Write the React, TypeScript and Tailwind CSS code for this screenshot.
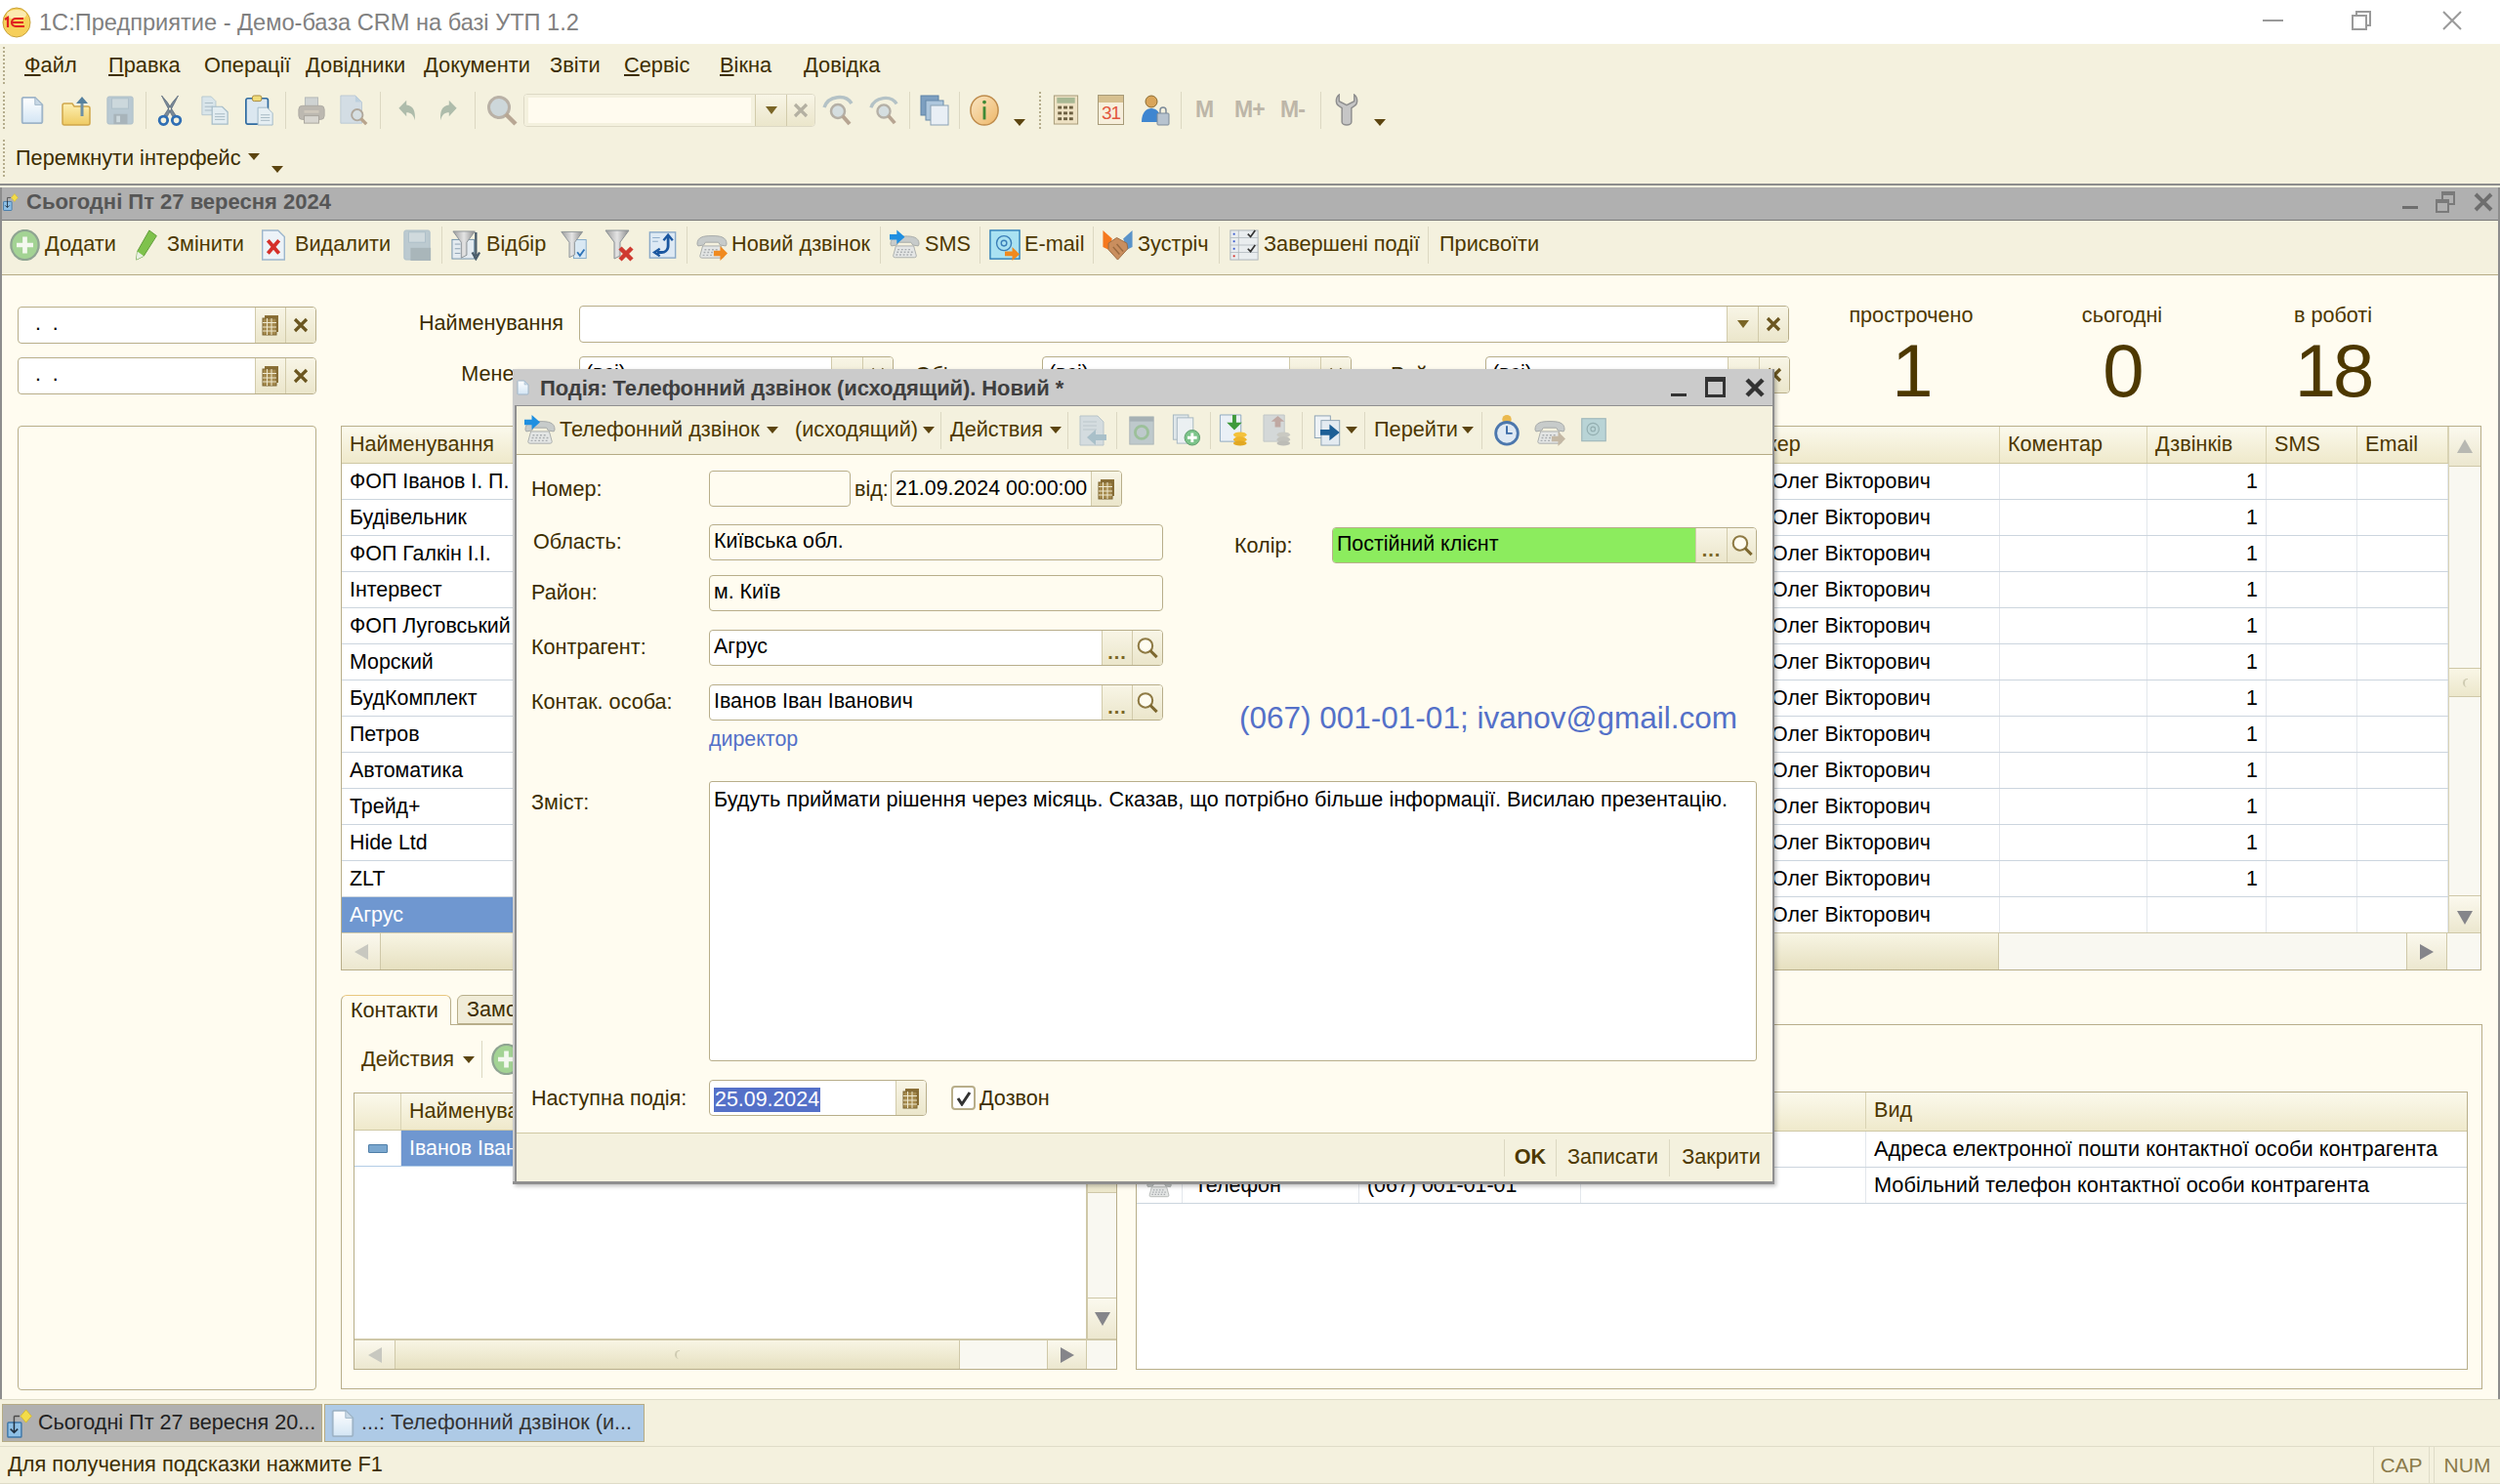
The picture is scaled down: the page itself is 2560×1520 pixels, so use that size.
import React from "react";

type P = { className?: string };
type C = { children?: React.ReactNode; className?: string };

const Doc = ({ className = "", stroke = "#9fb5c8" }: P & { stroke?: string }) => (
  <svg className={className} viewBox="0 0 26 32">
    <defs>
      <linearGradient id="docg" x1="0" y1="0" x2="0" y2="1">
        <stop offset="0" stopColor="#ffffff" />
        <stop offset="1" stopColor="#d3e5f4" />
      </linearGradient>
    </defs>
    <path d="M3 2h13l8 8v18a2 2 0 01-2 2H3a2 2 0 01-1-2V3z" fill="url(#docg)" stroke={stroke} strokeWidth="2" />
    <path d="M16 2v8h8z" fill="#c9d9e6" stroke={stroke} strokeWidth="1" />
  </svg>
);
const Folder = ({ className = "" }: P) => (
  <svg className={className} viewBox="0 0 30 32">
    <defs>
      <linearGradient id="fold" x1="0" y1="0" x2="0" y2="1">
        <stop offset="0" stopColor="#fdf0b4" />
        <stop offset="1" stopColor="#efcb62" />
      </linearGradient>
    </defs>
    <path d="M1 11a2 2 0 012-2h8l2 3h14a2 2 0 012 2v15a2 2 0 01-2 2H3a2 2 0 01-2-2z" fill="url(#fold)" stroke="#d0a74a" strokeWidth="1.5" />
    <path d="M21 22V5" stroke="#6d90a6" strokeWidth="3" />
    <path d="M15 9l6-7 6 7z" fill="#55819f" />
  </svg>
);
const Floppy = ({ className = "" }: P) => (
  <svg className={className} viewBox="0 0 30 32">
    <rect x="1" y="1" width="28" height="30" rx="2" fill="#b9c9d2" stroke="#aebfc8" />
    <rect x="6" y="3" width="18" height="11" fill="#ccd8dc" stroke="#aebfc8" />
    <rect x="8" y="20" width="15" height="11" fill="#a8b4ba" />
    <rect x="11" y="22" width="4" height="7" fill="#ccd8dc" />
  </svg>
);
const Scissors = ({ className = "" }: P) => (
  <svg className={className} viewBox="0 0 26 34" fill="none">
    <path d="M4 1l4 8 8 15 3-2L10 8zM22 1l-4 8-8 15-3-2 9-14z" fill="#7a8a98" stroke="#55667a" strokeWidth="0.8" />
    <circle cx="6" cy="28" r="4.5" stroke="#2f6eb4" strokeWidth="3" />
    <circle cx="20" cy="28" r="4.5" stroke="#2f6eb4" strokeWidth="3" />
  </svg>
);
const Copy = ({ className = "" }: P) => (
  <svg className={className} viewBox="0 0 30 32">
    <path d="M1 1h10l5 5v15H1z" fill="#d9e5ea" stroke="#b5c7cf" />
    <path d="M4 8h9M4 12h9M4 16h9" stroke="#a9bbc4" />
    <path d="M12 12h11l6 6v13H12z" fill="#e3edf1" stroke="#a5bcc8" strokeWidth="1.3" />
    <path d="M15 20h11M15 23h11M15 26h11" stroke="#a5b9c2" />
  </svg>
);
const Paste = ({ className = "" }: P) => (
  <svg className={className} viewBox="0 0 31 34">
    <rect x="1" y="4" width="24" height="28" rx="2" fill="#dbe7f0" stroke="#2f6ba0" strokeWidth="1.8" />
    <rect x="8" y="1" width="10" height="6" rx="2" fill="#f0dc7a" stroke="#a8883a" />
    <path d="M14 14h10l6 6v13H14z" fill="#e6eff3" stroke="#9fb8c6" />
    <path d="M17 22h10M17 25h10M17 28h10" stroke="#a5b9c2" />
  </svg>
);
const Printer = ({ className = "" }: P) => (
  <svg className={className} viewBox="0 0 30 32">
    <rect x="8" y="2" width="14" height="11" fill="#cfd3d2" stroke="#b4b8b8" />
    <rect x="1" y="11" width="28" height="15" rx="4" fill="#bcb8b0" stroke="#adaaa2" />
    <rect x="7" y="16" width="16" height="3" fill="#cfc8bc" />
    <rect x="7" y="22" width="16" height="8" fill="#d8d6d0" stroke="#a8a49c" />
  </svg>
);
const Preview = ({ className = "" }: P) => (
  <svg className={className} viewBox="0 0 31 34">
    <path d="M1 1h16l7 7v23H1z" fill="#d3dde4" stroke="#bccad4" />
    <path d="M17 1v7h7z" fill="#bdd0de" />
    <circle cx="19" cy="22" r="6" fill="#d6dfe2" stroke="#b0a89c" strokeWidth="2" />
    <path d="M23 26l6 6" stroke="#b8a48c" strokeWidth="3.5" />
  </svg>
);
const Undo = ({ className = "", flip = false }: P & { flip?: boolean }) => (
  <svg className={className} viewBox="0 0 24 28">
    <g transform={flip ? "translate(24 0) scale(-1 1)" : undefined}>
      <path d="M1 11L11 1v6c9 1 12 8 11 20-2-7-5-10-11-10v5z" fill="#aebcab" />
    </g>
  </svg>
);
const Glass = ({ className = "", c = "#b9b1a6", h = "#b8a794", f = "#cdd7da" }: P & { c?: string; h?: string; f?: string }) => (
  <svg className={className} viewBox="0 0 32 32">
    <circle cx="13" cy="13" r="10.5" fill={f} stroke={c} strokeWidth="3" />
    <path d="M20 20l10 10" stroke={h} strokeWidth="4.5" />
  </svg>
);
const FindArc = ({ className = "" }: P) => (
  <svg className={className} viewBox="0 0 32 34" fill="none">
    <path d="M2 14C6 2 24 0 30 10" stroke="#b4c2c6" strokeWidth="3.5" />
    <circle cx="16" cy="18" r="7" fill="#d5dee0" stroke="#b5b0a6" strokeWidth="2.5" />
    <path d="M21 23l7 8" stroke="#b7a592" strokeWidth="4" />
  </svg>
);
const Windows = ({ className = "" }: P) => (
  <svg className={className} viewBox="0 0 30 32">
    <rect x="1" y="1" width="18" height="20" fill="#7d9fc0" stroke="#5d82a5" />
    <rect x="6" y="6" width="18" height="20" fill="#aec7dd" stroke="#678aa9" />
    <rect x="11" y="11" width="18" height="20" fill="#e9eff5" stroke="#8aa1b4" />
  </svg>
);
const Info = ({ className = "" }: P) => (
  <svg className={className} viewBox="0 0 32 34">
    <defs>
      <linearGradient id="infg" x1="0" y1="0" x2="1" y2="1">
        <stop offset="0" stopColor="#f9e6c4" />
        <stop offset="1" stopColor="#eeb768" />
      </linearGradient>
    </defs>
    <ellipse cx="16" cy="17" rx="15" ry="16" fill="url(#infg)" stroke="#bf8c4c" strokeWidth="1.6" />
    <rect x="14.5" y="13" width="3" height="14" fill="#3e8a35" />
    <circle cx="16" cy="8" r="2" fill="#3e8a35" />
  </svg>
);
const Calc = ({ className = "" }: P) => (
  <svg className={className} viewBox="0 0 27 32">
    <rect x="1" y="1" width="25" height="30" fill="#eee2c4" stroke="#a69a78" />
    <rect x="4" y="3" width="19" height="6" fill="#a8b894" />
    <g fill="#6c5f40">
      <rect x="5" y="12" width="4" height="3" /><rect x="11" y="12" width="4" height="3" /><rect x="17" y="12" width="4" height="3" />
      <rect x="5" y="18" width="4" height="3" /><rect x="11" y="18" width="4" height="3" /><rect x="17" y="18" width="4" height="3" />
      <rect x="5" y="24" width="4" height="3" /><rect x="11" y="24" width="4" height="3" /><rect x="17" y="24" width="4" height="3" />
    </g>
  </svg>
);
const Cal31 = ({ className = "" }: P) => (
  <div className={`relative border border-[#a69a78] bg-[#f7efdc] flex items-end justify-center ${className}`}>
    <span className="absolute top-0 left-0 right-0 h-[7px] bg-[#d6c090]" />
    <span className="text-[19px] leading-[23px] text-[#e2563e] tracking-[-1px]">31</span>
  </div>
);
const UserLock = ({ className = "" }: P) => (
  <svg className={className} viewBox="0 0 30 32">
    <circle cx="11" cy="7" r="6" fill="#d9a55a" stroke="#8a6a30" />
    <path d="M1 28c0-10 5-14 10-14s10 4 10 14z" fill="#3f86d0" />
    <rect x="17" y="19" width="12" height="12" rx="1" fill="#b7c3cf" stroke="#7d8b99" />
    <path d="M20 19v-3a3 3 0 016 0v3" fill="none" stroke="#7d8b99" strokeWidth="1.5" />
  </svg>
);
const Wrench = ({ className = "" }: P) => (
  <svg className={className} viewBox="0 0 24 34">
    <path d="M4 1v7l8 4 8-4V1c4 3 4 10 0 12l-3 2v15a5 3 0 01-10 0V15l-3-2C0 11 0 4 4 1z" fill="#c6c6c6" stroke="#8e8e8e" strokeWidth="1.5" />
  </svg>
);
const PlusCircle = ({ className = "" }: P) => (
  <svg className={className} viewBox="0 0 32 34">
    <ellipse cx="16" cy="17" rx="15" ry="16" fill="#a3d394" stroke="#8fa492" strokeWidth="2.4" />
    <path d="M16 8v18M7 17h18" stroke="#f4f8ef" strokeWidth="5" />
  </svg>
);
const Pencil = ({ className = "" }: P) => (
  <svg className={className} viewBox="0 0 24 34">
    <path d="M15 1l8 6-14 22-8 4 1-9z" fill="#7fc24c" stroke="#5e9a38" />
    <path d="M1 33l1-9 7 5z" fill="#e9efe4" />
  </svg>
);
const DelDoc = ({ className = "" }: P) => (
  <svg className={className} viewBox="0 0 26 34">
    <path d="M1 1h17l7 7v25H1z" fill="#edf3f8" stroke="#9db6cc" strokeWidth="1.5" />
    <path d="M7 12l12 14M19 12L7 26" stroke="#d5302a" strokeWidth="4" />
  </svg>
);
const SaveOk = ({ className = "" }: P) => (
  <svg className={className} viewBox="0 0 30 34">
    <rect x="1" y="1" width="28" height="32" rx="2" fill="#bccad0" stroke="#aebfc8" />
    <rect x="6" y="3" width="18" height="11" fill="#d0dadd" stroke="#aebfc8" />
    <rect x="8" y="20" width="22" height="14" fill="#a9b6ba" />
  </svg>
);
const Funnel = ({ className = "", mode }: P & { mode?: "x" | "list" | "check" }) => (
  <svg className={className} viewBox="0 0 32 34">
    <defs>
      <linearGradient id="fung" x1="0" y1="0" x2="1" y2="0">
        <stop offset="0" stopColor="#9c9c9c" />
        <stop offset="0.5" stopColor="#e4e4e4" />
        <stop offset="1" stopColor="#8c8c8c" />
      </linearGradient>
    </defs>
    {mode === "list" && <rect x="1" y="11" width="24" height="21" fill="#e4ebf0" stroke="#6f8fa8" />}
    {mode === "list" && <path d="M4 16h6M4 21h6M4 26h6" stroke="#8a9eb0" />}
    {mode === "check" && <rect x="16" y="11" width="14" height="21" fill="#d9e8f3" stroke="#7fa7c8" />}
    <path d="M2 2h24L17 14v14l-6 3V14z" fill="url(#fung)" stroke="#8b9296" strokeWidth="1" />
    {mode === "x" && <path d="M17 20l12 12M29 20L17 32" stroke="#cf3a30" strokeWidth="4.5" />}
    {mode === "check" && <path d="M20 25l3 4 5-7" stroke="#2f74b8" strokeWidth="2" fill="none" />}
    {mode === "list" && <path d="M27 3v26M23 25l4 7 4-7" stroke="#4a5c6a" strokeWidth="2.5" fill="none" />}
  </svg>
);
const Refresh = ({ className = "" }: P) => (
  <svg className={className} viewBox="0 0 30 32" fill="none">
    <rect x="1" y="2" width="28" height="28" fill="#dde9f4" stroke="#8aa9c8" strokeWidth="1.5" />
    <path d="M4 8h8M4 12h6" stroke="#8aa9c8" />
    <path d="M21 7v10c0 5-4 7-7 7H9" stroke="#1b57a0" strokeWidth="3" />
    <path d="M16 11l5-6 5 6M12 20l-6 4 6 4" stroke="#1b57a0" strokeWidth="2.5" />
  </svg>
);
const PhoneIco = ({ className = "", arrow }: P & { arrow?: "orange" | "blue" | "dim" }) => (
  <svg className={className} viewBox="0 0 34 34">
    <path d="M1 16c0-8 7-9 16-9s16 1 16 9l-1 2-6-1-2-3H10l-2 3-6 1z" fill="#c7cbca" stroke="#a4a8a6" />
    <path d="M7 18h20l3 11a2 2 0 01-2 2H6a2 2 0 01-2-2z" fill="#e4e6e5" stroke="#a8acaa" />
    <g stroke="#a9adb0" strokeWidth="1.5">
      <path d="M9 22h16M8 25h18M7 28h20" strokeDasharray="2 2" />
    </g>
    {arrow === "orange" && <path d="M19 23h7v-5l8 8-8 8v-5h-7z" fill="#f08a1f" />}
    {arrow === "blue" && <path d="M0 5h8V0l9 8-9 8v-5H0z" fill="#1f8fe0" />}
    {arrow === "dim" && <path d="M19 23h7v-5l8 8-8 8v-5h-7z" fill="#c4b8a4" />}
  </svg>
);
const MailIco = ({ className = "", dim = false }: P & { dim?: boolean }) => (
  <svg className={className} viewBox="0 0 34 34">
    <rect x="1" y="1" width="32" height={dim ? 30 : 31} fill={dim ? "#b9d4d6" : "#a9e2f2"} stroke={dim ? "#9fb7ba" : "#2d7fb8"} strokeWidth="1.5" />
    <circle cx="16" cy="15" r="8" fill="none" stroke={dim ? "#93aeb0" : "#3a7fb8"} strokeWidth="1.5" />
    <circle cx="16" cy="15" r="3" fill="none" stroke={dim ? "#93aeb0" : "#3a7fb8"} strokeWidth="1.5" />
    {!dim && <path d="M17 24h8v-5l8 8-8 7v-5h-8z" fill="#f08a1f" />}
  </svg>
);
const Shake = ({ className = "" }: P) => (
  <svg className={className} viewBox="0 0 34 34">
    <path d="M1 1l10 9-4 12-6-3z" fill="#f5781e" />
    <path d="M33 1l-10 9 4 12 6-3z" fill="#5a93c9" />
    <path d="M7 15l9-6 11 6 1 6-11 12L7 22z" fill="#c98e5e" stroke="#9a6a40" />
    <path d="M12 19l7 8M16 16l7 8" stroke="#9a6a40" strokeWidth="1.5" />
  </svg>
);
const Checklist = ({ className = "" }: P) => (
  <svg className={className} viewBox="0 0 32 34">
    <rect x="1" y="1" width="30" height="32" fill="#e9edef" stroke="#aab2b8" />
    <path d="M1 9h30M1 17h30M1 25h30M10 1v32" stroke="#b8bfc4" />
    <g fill="#3a5bd0">
      <rect x="4" y="4" width="2" height="2" /><rect x="4" y="12" width="2" height="2" /><rect x="4" y="20" width="2" height="2" />
    </g>
    <rect x="4" y="28" width="2" height="2" fill="#d5302a" />
    <path d="M20 5l3 3 5-7M20 21l3 3 5-7" stroke="#333" strokeWidth="1.8" fill="none" />
  </svg>
);
const Clock = ({ className = "" }: P) => (
  <svg className={className} viewBox="0 0 28 36">
    <circle cx="14" cy="6" r="5" fill="#eab94e" />
    <circle cx="14" cy="21" r="12" fill="#dfe9f3" stroke="#4c77ad" strokeWidth="3" />
    <path d="M14 13v8h6" stroke="#3868a6" strokeWidth="2" fill="none" />
  </svg>
);
const DocArrow = ({ className = "" }: P) => (
  <svg className={className} viewBox="0 0 30 32">
    <path d="M2 1h18l6 6v24H2z" fill="#d4dcdf" stroke="#b8c4c9" />
    <path d="M5 7h14M5 11h14M5 15h14" stroke="#bcc7cc" />
    <path d="M9 23l9-8v5h11v6H18v5z" fill="#a9c0c9" />
  </svg>
);
const Recycle = ({ className = "" }: P) => (
  <svg className={className} viewBox="0 0 28 32">
    <rect x="1" y="1" width="26" height="30" fill="#bec9cc" stroke="#aab4b7" />
    <rect x="1" y="1" width="26" height="5" fill="#a5b0b4" />
    <circle cx="14" cy="18" r="7" fill="none" stroke="#9cc09a" strokeWidth="3" />
  </svg>
);
const DocsPlus = ({ className = "" }: P) => (
  <svg className={className} viewBox="0 0 30 34">
    <rect x="1" y="1" width="16" height="26" fill="#dfe7ea" stroke="#a6b7c0" />
    <rect x="5" y="4" width="17" height="27" fill="#ebf0f2" stroke="#a6b7c0" />
    <circle cx="21" cy="25" r="8" fill="#7cc48a" stroke="#5f9c6c" />
    <path d="M21 20v10M16 25h10" stroke="#fff" strokeWidth="3" />
  </svg>
);
const DocDb = ({ className = "", dim = false }: P & { dim?: boolean }) => (
  <svg className={className} viewBox="0 0 30 34">
    <path d="M1 1h22v28H1z" fill={dim ? "#d4d8d8" : "#eaf0f6"} stroke={dim ? "#c0c6c6" : "#90a9c0"} />
    <path d={dim ? "M16 2l-7 6h4v6h6V8h4z" : "M18 1v8h6l-8 8-8-8h6V1z"} fill={dim ? "#c0a8a2" : "#3f9a3c"} />
    <ellipse cx="22" cy="22" rx="7" ry="3" fill={dim ? "#c9c9c2" : "#f4c23c"} />
    <ellipse cx="22" cy="27" rx="7" ry="3" fill={dim ? "#c2c2bc" : "#eeb52c"} />
    <ellipse cx="22" cy="31" rx="7" ry="2.6" fill={dim ? "#bcbcb6" : "#e2a822"} />
  </svg>
);
const DocsGo = ({ className = "" }: P) => (
  <svg className={className} viewBox="0 0 30 34">
    <rect x="1" y="1" width="17" height="24" fill="#eef2f5" stroke="#8aa0b2" />
    <rect x="8" y="6" width="20" height="27" fill="#e4ebf1" stroke="#8aa0b2" />
    <path d="M7 16h10v-6l11 9-11 9v-6H7z" fill="#1d5f96" />
  </svg>
);
const SmallTaskIco = ({ className = "" }: P) => (
  <svg className={className} viewBox="0 0 30 32">
    <path d="M21 1l6 7-6 7-6-7z" fill="#f3dc48" stroke="#d4b92e" />
    <path d="M8 8h6M8 8v8" stroke="#4a4a4a" strokeWidth="1.5" />
    <rect x="1" y="15" width="15" height="16" rx="1" fill="#8ec0e6" stroke="#3c76a8" strokeWidth="1.5" />
    <path d="M8 14v11M4 22l4 4 4-4" stroke="#1f2f40" strokeWidth="1.6" fill="none" />
  </svg>
);

const Logo = ({ className = "" }: P) => (
  <svg className={className} viewBox="0 0 30 32">
    <ellipse cx="15" cy="16" rx="14" ry="15" fill="#f6cf5a" stroke="#c9a33a" />
    <ellipse cx="15" cy="8" rx="10" ry="5" fill="#fbeab0" />
    <path d="M3 13l3-2v10M22 12h-8a4 4 0 000 8h9M11 16h11" fill="none" stroke="#e02020" strokeWidth="2.2" />
  </svg>
);

const Caret = ({ className = "" }: P) => <span className={`shrink-0 w-0 h-0 border-x-[6px] border-x-transparent border-t-[7px] border-t-[#5c4510] ${className}`} />;
const Div = ({ className = "" }: P) => <span className={`shrink-0 w-px h-[38px] bg-[#dcd8c2] ${className}`} />;
const Grip = ({ className = "" }: P) => <span className={`shrink-0 w-[2px] h-[38px] border-l-2 border-dotted border-[#b5ad8c] ${className}`} />;
const Tx = ({ children, className = "" }: C) => <span className={`shrink-0 whitespace-nowrap text-[21.7px] text-[#4d3800] ${className}`}>{children}</span>;
const Ic = "shrink-0";

const CalIcon = () => (
  <svg className="w-[18px] h-[22px]" viewBox="0 0 18 22">
    <rect x="3" y="1" width="14" height="17" fill="#8a6f36" />
    <rect x="1" y="4" width="14" height="17" fill="#a58a4e" stroke="#7c6430" />
    <path d="M1 8.5h14M1 13h14M1 17h14M5.5 4v17M10 4v17" stroke="#efe9cf" strokeWidth="1" />
  </svg>
);
const XIcon = () => (
  <svg className="w-[16px] h-[16px]" viewBox="0 0 16 16">
    <path d="M2 2l12 12M14 2L2 14" stroke="#6b5620" strokeWidth="3.2" />
  </svg>
);
const Tri = () => <span className="w-0 h-0 border-x-[6px] border-x-transparent border-t-[8px] border-t-[#7a6526]" />;
const GlassBtn = () => <Glass className="w-[22px] h-[23px]" c="#8e7a44" h="#7d6830" f="#fffcf0" />;
const Dots = () => <span className="text-[#7a6526] font-bold text-[20px] leading-none tracking-[1px] mt-[8px]">...</span>;

const FB = ({ children, className = "" }: C) => (
  <span className={`flex items-center justify-center border-l border-[#d2cbab] bg-linear-to-b from-[#f8f5e6] to-[#ebe6cb] ${className}`}>{children}</span>
);

const Field = ({ children, className = "", white = true }: C & { white?: boolean }) => (
  <div className={`flex items-stretch h-[37px] border border-[#b8ae8a] rounded-[4px] overflow-hidden text-[21.4px] text-black ${white ? "bg-white" : "bg-[#fffcf0]"} ${className}`}>{children}</div>
);

const Hdr = ({ children, className = "" }: C) => (
  <div className={`flex items-center border-r border-[#d9d3b4] px-[8px] text-[21.6px] text-[#4d3800] whitespace-nowrap overflow-hidden ${className}`}>{children}</div>
);
const Cell = ({ children, className = "" }: C) => (
  <div className={`flex items-center border-r border-[#e3e7ec] px-[8px] pt-[1px] text-[21.4px] text-black whitespace-nowrap overflow-hidden ${className}`}>{children}</div>
);

const names = ["ФОП Іванов І. П.", "Будівельник", "ФОП Галкін І.І.", "Інтервест", "ФОП Луговський", "Морский", "БудКомплект", "Петров", "Автоматика", "Трейд+", "Hide Ltd", "ZLT", "Агрус"];

const ArrowBtn = ({ dir, className = "" }: C & { dir: "u" | "d" | "l" | "r" }) => {
  const t = {
    u: "border-x-[8px] border-x-transparent border-b-[14px] border-b-[#b8b8b2]",
    d: "border-x-[8px] border-x-transparent border-t-[14px] border-t-[#85858a]",
    l: "border-y-[8px] border-y-transparent border-r-[14px] border-r-[#c8c8c0]",
    r: "border-y-[8px] border-y-transparent border-l-[14px] border-l-[#85858a]",
  }[dir];
  return (
    <div className={`flex items-center justify-center bg-linear-to-b from-[#fbf9ee] to-[#ece7cf] border-[#cfc8a8] ${className}`}>
      <span className={`w-0 h-0 ${t}`} />
    </div>
  );
};
const ThumbDot = () => <span className="w-[5px] h-[9px] rounded-l-full border-l-2 border-t border-[#cfcbb2]" />;

export default function App() {
  return (
    <div className="relative w-[2560px] h-[1520px] overflow-hidden flex flex-col bg-white font-['Liberation_Sans',sans-serif] text-[#3d2e00]">
      {/* заголовок вікна */}
      <div className="h-[45px] shrink-0 flex items-center bg-white">
        <Logo className="ml-[2px] w-[30px] h-[32px]" />
        <span className="ml-[8px] pt-[2px] text-[23.6px] text-[#808080] whitespace-nowrap">1С:Предприятие - Демо-база CRM на базі УТП 1.2</span>
        <div className="ml-auto flex items-center -mt-[3px]">
          <span className="w-[21px] h-[2px] bg-[#9a9a9a] mr-[70px]" />
          <span className="relative w-[20px] h-[20px] mr-[73px]">
            <span className="absolute left-[4px] top-0 w-[16px] h-[16px] border-2 border-[#9a9a9a]" />
            <span className="absolute left-0 top-[4px] w-[16px] h-[16px] border-2 border-[#9a9a9a] bg-white" />
          </span>
          <svg className="w-[20px] h-[20px] mr-[39px]" viewBox="0 0 20 20"><path d="M1 1l18 18M19 1L1 19" stroke="#9a9a9a" strokeWidth="2" /></svg>
        </div>
      </div>

      {/* меню і панелі */}
      <div className="h-[143px] shrink-0 bg-[#f4f1de] flex flex-col">
        <div className="h-[44px] flex items-center text-[21.8px] text-[#3d2e00]">
          <Grip className="ml-[3px]" />
          <div className="ml-[20px] flex whitespace-nowrap">
            <span className="w-[86px]"><u>Ф</u>айл</span>
            <span className="w-[98px]"><u>П</u>равка</span>
            <span className="w-[104px]">Операції</span>
            <span className="w-[121px]">Довідники</span>
            <span className="w-[129px]">Документи</span>
            <span className="w-[76px]">Звіти</span>
            <span className="w-[98px]"><u>С</u>ервіс</span>
            <span className="w-[86px]"><u>В</u>ікна</span>
            <span>Довідка</span>
          </div>
        </div>
        <div className="h-[47px] flex items-center">
          <Grip className="ml-[3px]" />
          <Doc className={`${Ic} ml-[15px] w-[26px] h-[30px]`} />
          <Folder className={`${Ic} ml-[17px] w-[30px] h-[32px]`} />
          <Floppy className={`${Ic} ml-[15px] w-[30px] h-[30px]`} />
          <Div className="ml-[11px]" />
          <Scissors className={`${Ic} ml-[11px] w-[26px] h-[32px]`} />
          <Copy className={`${Ic} ml-[18px] w-[30px] h-[30px]`} />
          <Paste className={`${Ic} ml-[15px] w-[31px] h-[32px]`} />
          <Div className="ml-[11px]" />
          <Printer className={`${Ic} ml-[11px] w-[30px] h-[30px]`} />
          <Preview className={`${Ic} ml-[13px] w-[31px] h-[32px]`} />
          <Div className="ml-[11px]" />
          <Undo className={`${Ic} ml-[15px] w-[24px] h-[22px]`} />
          <Undo flip className={`${Ic} ml-[18px] w-[24px] h-[22px]`} />
          <Div className="ml-[15px]" />
          <Glass className={`${Ic} ml-[11px] w-[32px] h-[32px]`} />
          <div className="ml-[6px] w-[299px] h-[34px] shrink-0 flex border border-[#ddd9c5] rounded-[4px] overflow-hidden bg-[#fffbef]">
            <div className="w-[236px] border-[4px] border-[#f4f1de] border-y-[3px]" />
            <FB className="w-[32px]"><Tri /></FB>
            <FB className="w-[29px]"><svg className="w-[16px] h-[16px]" viewBox="0 0 16 16"><path d="M2 2l12 12M14 2L2 14" stroke="#b4b0a2" strokeWidth="3.2" /></svg></FB>
          </div>
          <FindArc className={`${Ic} ml-[7px] w-[32px] h-[34px]`} />
          <FindArc className={`${Ic} ml-[16px] w-[30px] h-[34px]`} />
          <Div className="ml-[11px]" />
          <Windows className={`${Ic} ml-[10px] w-[30px] h-[32px]`} />
          <Div className="ml-[10px]" />
          <Info className={`${Ic} ml-[9px] w-[32px] h-[32px]`} />
          <Caret className="ml-[14px] mt-[26px]" />
          <Grip className="ml-[14px]" />
          <Calc className={`${Ic} ml-[12px] w-[27px] h-[31px]`} />
          <Cal31 className="shrink-0 ml-[19px] w-[27px] h-[31px]" />
          <UserLock className={`${Ic} ml-[17px] w-[30px] h-[32px]`} />
          <Div className="ml-[11px]" />
          <span className="shrink-0 ml-[14px] w-[20px] text-[23px] font-bold text-[#bdb6a8]">M</span>
          <span className="shrink-0 ml-[20px] w-[33px] text-[23px] font-bold text-[#bdb6a8] whitespace-nowrap tracking-[-1px]">M+</span>
          <span className="shrink-0 ml-[14px] w-[32px] text-[23px] font-bold text-[#bdb6a8] whitespace-nowrap tracking-[-1px]">M-</span>
          <Div className="ml-[9px]" />
          <Wrench className={`${Ic} ml-[14px] w-[24px] h-[33px]`} />
          <Caret className="ml-[16px] mt-[26px]" />
        </div>
        <div className="h-[52px] flex items-center relative">
          <Grip className="ml-[3px]" />
          <span className="ml-[11px] pt-[1px] w-[238px] text-[21.7px] text-[#3d2e00] whitespace-nowrap">Перемкнути інтерфейс</span>
          <Caret className="-mt-[3px]" />
          <Caret className="ml-[12px] mt-[22px]" />
        </div>
      </div>

      {/* основне вікно */}
      <div className="flex-1 min-h-0 flex flex-col border-t-2 border-[#8d8d8d]">
        <div className="h-[2px] bg-[#f4f1de] shrink-0" />
        <div className="flex-1 min-h-0 flex flex-col border-x-2 border-[#8d8d8d]">
          <div className="h-[34px] shrink-0 bg-[#b0b0b0] border-b border-[#777] flex items-center pb-[4px]">
            <SmallTaskIco className="ml-[1px] w-[17px] h-[20px]" />
            <span className="ml-[7px] text-[22px] font-bold text-[#565656] whitespace-nowrap">Сьогодні Пт 27 вересня 2024</span>
            <div className="ml-auto flex items-center">
              <span className="mt-[12px] w-[16px] h-[3px] bg-[#6e6e6e] mr-[18px]" />
              <span className="relative w-[20px] h-[22px] mr-[19px]">
                <span className="absolute right-0 top-0 w-[14px] h-[14px] border-2 border-t-4 border-[#7a7a7a]" />
                <span className="absolute left-0 bottom-0 w-[14px] h-[14px] border-2 border-t-4 border-[#7a7a7a] bg-[#b0b0b0]" />
              </span>
              <svg className="w-[20px] h-[20px] mr-[5px]" viewBox="0 0 20 20"><path d="M2 2l16 16M18 2L2 18" stroke="#6e6e6e" strokeWidth="4" /></svg>
            </div>
          </div>
          <div className="h-[56px] shrink-0 bg-[#f4f1de] border-b border-[#b5ab85] flex items-center pb-[6px]">
            <PlusCircle className={`${Ic} ml-[8px] w-[31px] h-[32px]`} />
            <Tx className="ml-[5px] w-[74px]">Додати</Tx>
            <Pencil className={`${Ic} ml-[18px] w-[24px] h-[32px]`} />
            <Tx className="ml-[9px] w-[79px]">Змінити</Tx>
            <DelDoc className={`${Ic} ml-[17px] w-[26px] h-[32px]`} />
            <Tx className="ml-[9px] w-[94px]">Видалити</Tx>
            <SaveOk className={`${Ic} ml-[16px] w-[30px] h-[32px]`} />
            <Div className="ml-[10px]" />
            <Funnel mode="list" className={`${Ic} ml-[9px] w-[30px] h-[32px]`} />
            <Tx className="ml-[6px] w-[60px]">Відбір</Tx>
            <Funnel mode="check" className={`${Ic} ml-[15px] w-[29px] h-[32px]`} />
            <Funnel mode="x" className={`${Ic} ml-[16px] w-[32px] h-[34px]`} />
            <Refresh className={`${Ic} ml-[14px] w-[29px] h-[30px]`} />
            <Div className="ml-[10px]" />
            <PhoneIco arrow="orange" className={`${Ic} ml-[9px] w-[32px] h-[32px]`} />
            <Tx className="ml-[4px] w-[142px]">Новий дзвінок</Tx>
            <Div className="ml-[10px]" />
            <PhoneIco arrow="blue" className={`${Ic} ml-[9px] w-[31px] h-[32px]`} />
            <Tx className="ml-[5px] w-[46px]">SMS</Tx>
            <Div className="ml-[10px]" />
            <MailIco className={`${Ic} ml-[9px] w-[32px] h-[32px]`} />
            <Tx className="ml-[4px] w-[59px]">E-mail</Tx>
            <Div className="ml-[11px]" />
            <Shake className={`${Ic} ml-[8px] w-[33px] h-[32px]`} />
            <Tx className="ml-[4px] w-[73px]">Зустріч</Tx>
            <Div className="ml-[10px]" />
            <Checklist className={`${Ic} ml-[9px] w-[32px] h-[32px]`} />
            <Tx className="ml-[4px] w-[158px]">Завершені події</Tx>
            <Div className="ml-[10px]" />
            <Tx className="ml-[11px]">Присвоїти</Tx>
          </div>

          {/* вміст */}
          <div className="flex-1 min-h-0 bg-[#fffcf0] flex pt-[32px] pl-[16px]">
            <div className="w-[306px] shrink-0 flex flex-col">
              {[0, 1].map((i) => (
                <Field key={i} className="h-[38px] mb-[14px] justify-between">
                  <span className="pl-[17px] pt-[1px] text-black leading-[30px] flex-1">.&nbsp;&nbsp;.</span>
                  <FB className="w-[31px]"><CalIcon /></FB>
                  <FB className="w-[31px]"><XIcon /></FB>
                </Field>
              ))}
              <div className="mt-[18px] h-[988px] border border-[#b8ae8a] rounded-[4px]" />
            </div>

            <div className="ml-[25px] w-[2193px] shrink-0 flex flex-col">
              <div className="h-[122px] shrink-0 flex">
                <div className="w-[1500px] shrink-0 text-[21.6px] text-[#3d2e00] -mt-[1px]">
                  <div className="flex items-center h-[38px] mb-[14px]">
                    <span className="w-[228px] text-right whitespace-nowrap pb-[1px]">Найменування</span>
                    <Field className="ml-[16px] h-[38px] w-[1239px]">
                      <span className="flex-1" />
                      <FB className="w-[32px]"><Tri /></FB>
                      <FB className="w-[31px]"><XIcon /></FB>
                    </Field>
                  </div>
                  <div className="flex items-center h-[38px]">
                    <span className="w-[228px] text-right whitespace-nowrap pb-[1px]">Менеджер</span>
                    <Field className="ml-[16px] h-[38px] w-[322px]">
                      <span className="flex-1 pl-[6px]">(всі)</span>
                      <FB className="w-[32px]"><Tri /></FB>
                      <FB className="w-[31px]"><XIcon /></FB>
                    </Field>
                    <span className="ml-[22px] w-[110px] whitespace-nowrap">Об'єкт</span>
                    <Field className="ml-[20px] h-[38px] w-[317px]">
                      <span className="flex-1 pl-[6px]">(всі)</span>
                      <FB className="w-[32px]"><Tri /></FB>
                      <FB className="w-[31px]"><XIcon /></FB>
                    </Field>
                    <span className="ml-[40px] w-[80px] whitespace-nowrap">Район</span>
                    <Field className="ml-[17px] h-[38px] w-[312px]">
                      <span className="flex-1 pl-[6px]">(всі)</span>
                      <FB className="w-[32px]"><Tri /></FB>
                      <FB className="w-[31px]"><XIcon /></FB>
                    </Field>
                  </div>
                </div>
                <div className="flex text-[#4d3800] -mt-[3px]">
                  {[["прострочено", "1"], ["сьогодні", "0"], ["в роботі", "18"]].map(([l, v]) => (
                    <div key={l} className="w-[216px] flex flex-col items-center">
                      <span className="text-[21.6px] leading-[24px]">{l}</span>
                      <span className="text-[76px] leading-[76px] mt-[7px] tracking-[-3px]">{v}</span>
                    </div>
                  ))}
                </div>
              </div>

              {/* таблиця контрагентів */}
              <div className="w-[2192px] h-[558px] shrink-0 border border-[#b8ae8a] flex flex-col bg-white">
                <div className="flex flex-1 min-h-0">
                  <div className="w-[2157px] flex flex-col">
                    <div className="h-[38px] shrink-0 flex bg-linear-to-b from-[#fbf9ec] to-[#efe9cb] border-b border-[#cfc8a4]">
                      <Hdr className="w-[1381px]">Найменування</Hdr>
                      <Hdr className="w-[317px]">Менеджер</Hdr>
                      <Hdr className="w-[151px]">Коментар</Hdr>
                      <Hdr className="w-[122px]">Дзвінків</Hdr>
                      <Hdr className="w-[93px]">SMS</Hdr>
                      <Hdr className="w-[93px]">Email</Hdr>
                    </div>
                    {names.map((n, i) => (
                      <div key={n} className="h-[37px] shrink-0 flex border-b border-[#ccd5de]">
                        <Cell className={`w-[1381px] ${i === 12 ? "bg-[#6f97d0] text-white" : ""}`}>{n}</Cell>
                        <Cell className="w-[317px] pl-[83px]">Олег Вікторович</Cell>
                        <Cell className="w-[151px]" />
                        <Cell className="w-[122px] justify-end">{i < 12 ? "1" : ""}</Cell>
                        <Cell className="w-[93px]" />
                        <Cell className="w-[93px]" />
                      </div>
                    ))}
                  </div>
                  <div className="w-[34px] flex flex-col bg-[#f9f8f1] border-l border-[#d9d3b4]">
                    <ArrowBtn dir="u" className="h-[41px] border-b" />
                    <div className="h-[206px]" />
                    <div className="h-[30px] flex items-center justify-center bg-linear-to-b from-[#f9f6e6] to-[#ece7cb] border-y border-[#cfc8a8]"><ThumbDot /></div>
                    <div className="flex-1" />
                    <ArrowBtn dir="d" className="h-[38px] border-t pt-[6px]" />
                  </div>
                </div>
                <div className="h-[38px] shrink-0 flex bg-[#f9f8f1] border-t border-[#cfc8a8]">
                  <ArrowBtn dir="l" className="w-[40px] border-r" />
                  <div className="w-[1657px] bg-linear-to-b from-[#f8f5e4] to-[#e6e0c0] border-r border-[#cfc8a8]" />
                  <div className="flex-1" />
                  <ArrowBtn dir="r" className="w-[42px] border-x" />
                  <div className="w-[34px]" />
                </div>
              </div>

              {/* вкладки */}
              <div className="mt-[25px] h-[30px] flex items-end shrink-0 relative z-10 text-[21.6px]">
                <div className="w-[113px] h-[31px] -mb-px border border-b-0 border-[#b8ae8a] border-t-[#e9c77e] rounded-t-[6px] bg-[#fffcf0] flex items-center pl-[9px] text-[#3d2e00]">Контакти</div>
                <div className="ml-[6px] w-[200px] h-[30px] border border-[#b8ae8a] rounded-t-[6px] bg-[#f0ecd8] flex items-center pl-[9px] text-[#3d2e00]">Замовлення</div>
              </div>
              <div className="w-[2193px] h-[374px] shrink-0 border border-[#b8ae8a] flex">
                <div className="ml-[12px] w-[782px] shrink-0 flex flex-col">
                  <div className="h-[69px] flex items-center pt-[1px]">
                    <Tx className="ml-[8px] w-[96px]">Действия</Tx>
                    <Caret className="ml-[8px]" />
                    <Div className="ml-[7px]" />
                    <PlusCircle className={`${Ic} ml-[9px] w-[31px] h-[32px]`} />
                  </div>
                  <div className="h-[284px] border border-[#b8ae8a] flex flex-col bg-white">
                    <div className="flex flex-1 min-h-0">
                      <div className="flex-1 flex flex-col">
                        <div className="h-[38px] flex bg-linear-to-b from-[#fbf9ec] to-[#efe9cb] border-b border-[#cfc8a4]">
                          <Hdr className="w-[48px]" />
                          <Hdr className="flex-1">Найменування</Hdr>
                        </div>
                        <div className="h-[37px] flex border-b border-[#b3cde6]">
                          <div className="w-[48px] flex items-center justify-center border-r border-[#e3e7ec]">
                            <span className="w-[20px] h-[9px] rounded-[1px] bg-[#7aa7cf] border border-[#4f7ea8]" />
                          </div>
                          <Cell className="flex-1 bg-[#6f97d0] text-white">Іванов Іван Іванович</Cell>
                        </div>
                      </div>
                      <div className="w-[31px] flex flex-col bg-[#f9f8f1] border-l-2 border-[#cfc8a8]">
                        <div className="h-[71px]" />
                        <div className="h-[31px] flex items-center justify-center bg-linear-to-b from-[#f9f6e6] to-[#ece7cb] border-y border-[#cfc8a8]"><ThumbDot /></div>
                        <div className="flex-1" />
                        <ArrowBtn dir="d" className="h-[42px] border-t" />
                      </div>
                    </div>
                    <div className="h-[31px] flex bg-[#f9f8f1] border-t-2 border-[#cfc8a8]">
                      <ArrowBtn dir="l" className="w-[42px] border-r" />
                      <div className="w-[578px] flex items-center justify-center bg-linear-to-b from-[#f8f5e4] to-[#e6e0c0] border-r border-[#cfc8a8]"><ThumbDot /></div>
                      <div className="w-[89px]" />
                      <ArrowBtn dir="r" className="w-[41px] border-x" />
                    </div>
                  </div>
                </div>
                <div className="ml-[19px] mt-[68px] w-[1364px] h-[285px] shrink-0 border border-[#b8ae8a] bg-white flex flex-col">
                  <div className="h-[40px] flex bg-linear-to-b from-[#fbf9ec] to-[#efe9cb] border-b border-[#cfc8a4] pb-[2px]">
                    <Hdr className="w-[47px]" />
                    <Hdr className="w-[181px]">Тип</Hdr>
                    <Hdr className="w-[227px]">Контакт</Hdr>
                    <Hdr className="w-[292px]">Коментар</Hdr>
                    <Hdr className="flex-1 border-r-0">Вид</Hdr>
                  </div>
                  {[
                    ["Email", "ivanov@gmail.com", "Адреса електронної пошти контактної особи контрагента"],
                    ["Телефон", "(067) 001-01-01", "Мобільний телефон контактної особи контрагента"],
                  ].map(([t, v, d]) => (
                    <div key={t} className="h-[37px] flex border-b border-[#ccd5de]">
                      <Cell className="w-[47px] justify-center"><PhoneIco className="w-[26px] h-[26px]" /></Cell>
                      <Cell className="w-[181px] px-[12px]">{t}</Cell>
                      <Cell className="w-[227px]">{v}</Cell>
                      <Cell className="w-[292px]" />
                      <Cell className="flex-1 border-r-0"><span className="text-[21.75px]">{d}</span></Cell>
                    </div>
                  ))}
                </div>
              </div>
            </div>
          </div>
        </div>
      </div>

      {/* панель вікон */}
      <div className="h-[48px] shrink-0 bg-[#f4f1de] flex items-center gap-[2px] pl-[2px] border-t border-[#dfdcc8]">
        <div className="w-[328px] h-[39px] bg-[#b0b0b0] border border-[#b5ab85] flex items-center overflow-hidden">
          <SmallTaskIco className="ml-[3px] w-[30px] h-[30px] shrink-0" />
          <span className="ml-[3px] text-[21.6px] text-[#222] whitespace-nowrap">Сьогодні Пт 27 вересня 20...</span>
        </div>
        <div className="w-[328px] h-[39px] bg-[#aecae6] border border-[#b5ab85] flex items-center overflow-hidden">
          <Doc className="ml-[5px] w-[26px] h-[30px] shrink-0" />
          <span className="ml-[6px] text-[21.6px] text-[#333] whitespace-nowrap">...: Телефонний дзвінок (и...</span>
        </div>
      </div>

      {/* рядок стану */}
      <div className="h-[39px] shrink-0 bg-[#f4f1de] border-y border-[#dfdcc8] flex items-stretch">
        <span className="pl-[8px] flex-1 flex items-center text-[21.8px] text-[#3d2e00] whitespace-nowrap">Для получения подсказки нажмите F1</span>
        <span className="w-[58px] flex items-center justify-center border-x border-[#dfdcc8] text-[21px] text-[#8a7a4a]">CAP</span>
        <span className="ml-[4px] w-[68px] flex items-center justify-center border-l border-[#dfdcc8] text-[21px] text-[#8a7a4a]">NUM</span>
      </div>

      {/* діалог події */}
      <div className="absolute z-20 left-[525px] top-[378px] w-[1292px] h-[835px] bg-[#cbcbcb] border-b-[3px] border-r-[2px] border-[#8f8f8f] flex flex-col pl-[2px] shadow-[2px_2px_4px_rgba(0,0,0,0.25)] text-[21.6px]">
        <div className="h-[37px] shrink-0 flex items-center">
          <Doc className="ml-[2px] w-[13px] h-[16px]" />
          <span className="ml-[11px] pt-[2px] text-[22px] font-bold text-[#3f3f3f] whitespace-nowrap tracking-[-0.1px]">Подія: Телефонний дзвінок (исходящий). Новий *</span>
          <div className="ml-auto flex items-center">
            <span className="mt-[15px] w-[16px] h-[3px] bg-[#333] mr-[19px]" />
            <span className="w-[21px] h-[21px] border-[3px] border-t-[5px] border-[#333] mr-[20px]" />
            <svg className="w-[20px] h-[20px] mr-[8px]" viewBox="0 0 20 20"><path d="M2 2l16 16M18 2L2 18" stroke="#333" strokeWidth="4.5" /></svg>
          </div>
        </div>
        <div className="flex-1 min-h-0 flex flex-col border-l-2 border-t border-[#8f8f8f] bg-[#fffcf0]">
          {/* панель дій */}
          <div className="h-[50px] shrink-0 bg-[#f4f1de] border-b border-[#b5ab85] flex items-center">
            <PhoneIco arrow="blue" className={`${Ic} ml-[8px] w-[32px] h-[32px]`} />
            <Tx className="ml-[4px] w-[206px]">Телефонний дзвінок</Tx>
            <Caret className="ml-[6px]" />
            <Tx className="ml-[17px] w-[124px]">(исходящий)</Tx>
            <Caret className="ml-[7px]" />
            <Div className="ml-[6px]" />
            <Tx className="ml-[9px] w-[94px]">Действия</Tx>
            <Caret className="ml-[8px]" />
            <Div className="ml-[6px]" />
            <DocArrow className={`${Ic} ml-[10px] w-[30px] h-[32px]`} />
            <Div className="ml-[9px]" />
            <Recycle className={`${Ic} ml-[11px] w-[28px] h-[30px]`} />
            <DocsPlus className={`${Ic} ml-[17px] w-[30px] h-[33px]`} />
            <Div className="ml-[9px]" />
            <DocDb className={`${Ic} ml-[8px] w-[30px] h-[33px]`} />
            <DocDb dim className={`${Ic} ml-[15px] w-[29px] h-[33px]`} />
            <Div className="ml-[11px]" />
            <DocsGo className={`${Ic} ml-[11px] w-[29px] h-[32px]`} />
            <Caret className="ml-[4px]" />
            <Div className="ml-[7px]" />
            <Tx className="ml-[9px] w-[84px]">Перейти</Tx>
            <Caret className="ml-[6px]" />
            <Div className="ml-[8px]" />
            <Clock className={`${Ic} ml-[11px] w-[28px] h-[34px]`} />
            <PhoneIco arrow="dim" className={`${Ic} ml-[14px] w-[32px] h-[32px]`} />
            <MailIco dim className={`${Ic} ml-[13px] w-[32px] h-[26px]`} />
          </div>

          {/* форма */}
          <div className="flex-1 min-h-0 flex flex-col pl-[15px] text-[#3d2e00]">
            <div className="flex mt-[16px] h-[320px] shrink-0">
              <div className="w-[647px] shrink-0 flex flex-col">
                <div className="flex items-center h-[37px]">
                  <span className="w-[182px] whitespace-nowrap pt-[2px]">Номер:</span>
                  <Field white={false} className="w-[145px]" />
                  <span className="ml-[4px] w-[37px] pt-[2px]">від:</span>
                  <Field className="w-[237px]" white={false}>
                    <span className="flex-1 pl-[4px] leading-[34px] whitespace-nowrap">21.09.2024 00:00:00</span>
                    <FB className="w-[31px]"><CalIcon /></FB>
                  </Field>
                </div>
                <div className="flex items-center h-[37px] mt-[18px]">
                  <span className="pl-[2px] w-[182px]">Область:</span>
                  <Field white={false} className="w-[465px]"><span className="pl-[4px] leading-[33px]">Київська обл.</span></Field>
                </div>
                <div className="flex items-center h-[37px] mt-[15px]">
                  <span className="w-[182px]">Район:</span>
                  <Field white={false} className="w-[465px]"><span className="pl-[4px] leading-[33px]">м. Київ</span></Field>
                </div>
                <div className="flex items-center h-[37px] mt-[19px]">
                  <span className="w-[182px]">Контрагент:</span>
                  <Field className="w-[465px]">
                    <span className="flex-1 pl-[4px] leading-[33px]">Агрус</span>
                    <FB className="w-[31px]"><Dots /></FB>
                    <FB className="w-[31px]"><GlassBtn /></FB>
                  </Field>
                </div>
                <div className="flex items-center h-[37px] mt-[19px]">
                  <span className="w-[182px] whitespace-nowrap">Контак. особа:</span>
                  <Field className="w-[465px]">
                    <span className="flex-1 pl-[4px] leading-[33px]">Іванов Іван Іванович</span>
                    <FB className="w-[31px]"><Dots /></FB>
                    <FB className="w-[31px]"><GlassBtn /></FB>
                  </Field>
                </div>
                <span className="ml-[182px] mt-[3px] text-[#5470c8] text-[21.4px]">директор</span>
              </div>
              <div className="ml-[73px] flex flex-col">
                <div className="flex items-center h-[37px] mt-[58px]">
                  <span className="w-[100px] pt-[1px]">Колір:</span>
                  <Field className="w-[435px] bg-[#8cec5e]">
                    <span className="flex-1 pl-[4px] leading-[33px] bg-[#8cec5e]">Постійний клієнт</span>
                    <FB className="w-[32px]"><Dots /></FB>
                    <FB className="w-[30px]"><GlassBtn /></FB>
                  </Field>
                </div>
                <span className="ml-[5px] mt-[138px] text-[31.5px] leading-[40px] text-[#5470c8] whitespace-nowrap">(067) 001-01-01; ivanov@gmail.com</span>
              </div>
            </div>

            <div className="flex h-[287px] shrink-0 -mt-[2px]">
              <span className="w-[182px] pt-[6px]">Зміст:</span>
              <div className="w-[1073px] border border-[#b8ae8a] rounded-[3px] bg-white pl-[4px] pt-[2px] text-[21.6px] text-black whitespace-nowrap">
                Будуть приймати рішення через місяць. Сказав, що потрібно більше інформації. Висилаю презентацію.
              </div>
            </div>

            <div className="flex items-center h-[37px] mt-[19px]">
              <span className="w-[182px] whitespace-nowrap pt-[2px]">Наступна подія:</span>
              <Field className="w-[223px]">
                <span className="flex-1 pl-[4px] pt-[3px]">
                  <span className="inline-block h-[25px] leading-[25px] px-[1px] bg-[#5470c8] text-white">25.09.2024</span>
                </span>
                <FB className="w-[31px]"><CalIcon /></FB>
              </Field>
              <span className="ml-[25px] w-[25px] h-[25px] rounded-[4px] border-2 border-[#b8ae8a] bg-white flex items-center justify-center">
                <svg className="w-[16px] h-[16px]" viewBox="0 0 16 16"><path d="M2 8l4 6 8-12" fill="none" stroke="#333" strokeWidth="3" /></svg>
              </span>
              <span className="ml-[4px] pt-[2px]">Дозвон</span>
            </div>
          </div>

          {/* нижні кнопки */}
          <div className="h-[50px] shrink-0 bg-[#f4f1de] border-t border-[#cfc8a4] flex items-center justify-end">
            <Div />
            <span className="w-[52px] text-center font-bold text-[#4d3800]">OK</span>
            <Div />
            <span className="w-[115px] text-center text-[#4d3800]">Записати</span>
            <Div />
            <span className="w-[105px] text-center text-[#4d3800] whitespace-nowrap">Закрити</span>
          </div>
        </div>
      </div>
    </div>
  );
}
